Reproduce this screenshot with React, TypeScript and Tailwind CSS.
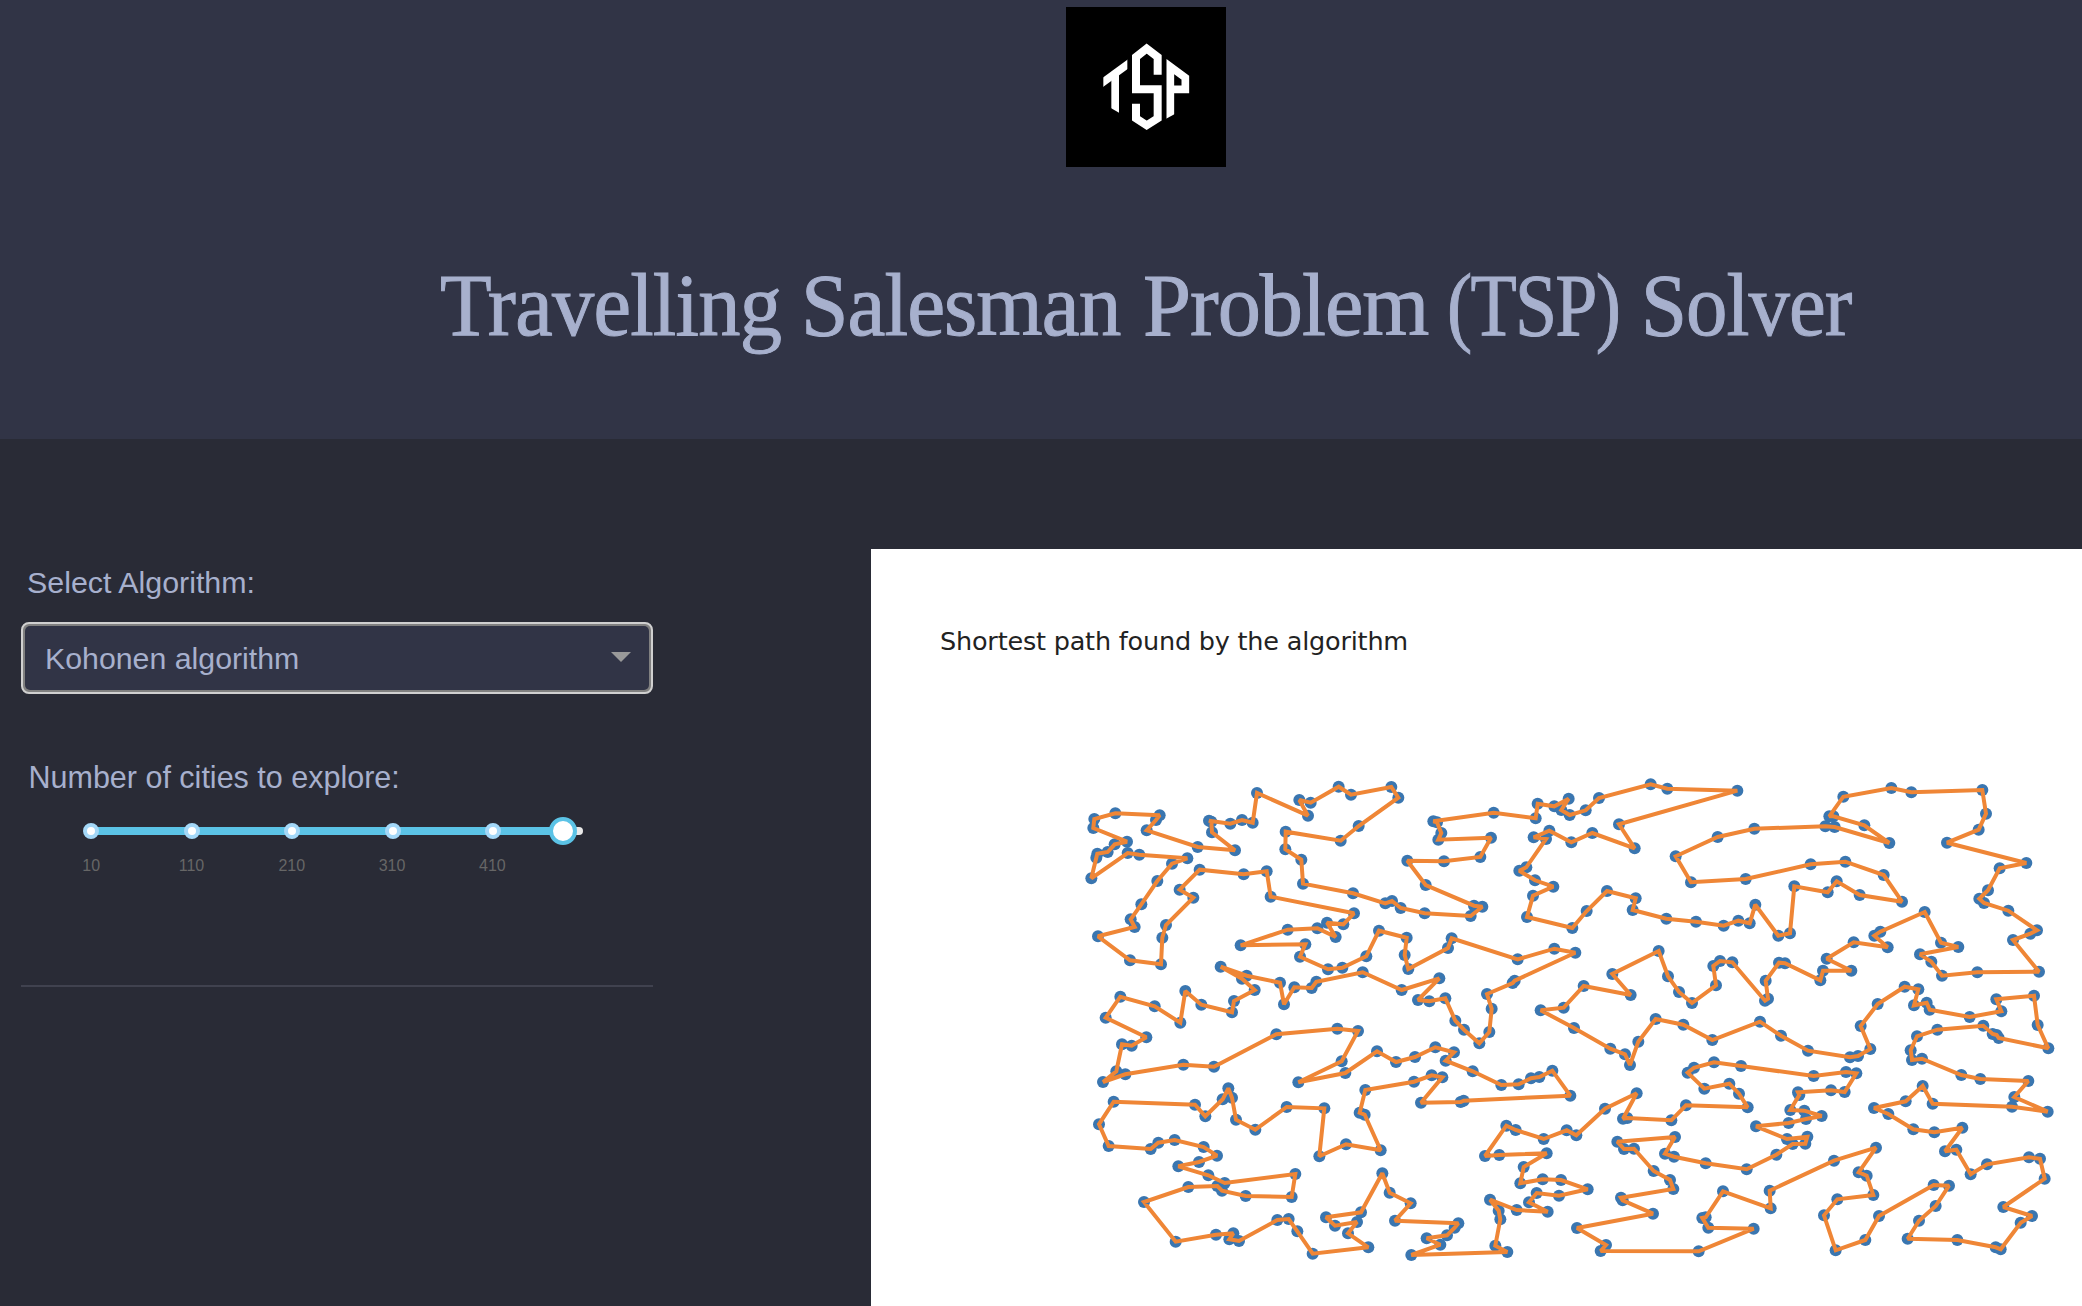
const BLOCKS: Record<string, [number, number]> = {
  A: [1070, 770],
  B: [1390, 770],
  C: [1720, 770],
  D: [1070, 1010],
  E: [1390, 1010],
  F: [1720, 1010],
};

// City coordinates in visiting order, in thirds of a pixel from the block named by the letter before them.
const TOUR = `
A 136,130 269,136 258,150 230,181 383,231 495,241 426,187 424,155 417,152 481,161 516,150 548,158 561,69 714,137 688,90 722,98
806,50 843,74 964,51 985,83 866,168 812,212 647,185 646,238 694,269 699,341 849,370 946,400 966,393 992,414
B 104,430 242,438 277,410 252,407 107,345 52,272 162,274 271,261 303,203 145,209 154,189 141,157 130,154 311,128 437,145 443,101
493,109 536,86 514,120 539,135 587,121 627,84 782,43 832,56
C 52,62
B 687,163 734,235 607,189 544,217 478,182 431,202 468,207 409,292 388,302 435,331 490,350 429,377 411,441 547,474 590,423
651,363 737,385 728,420 829,446 918,455 1001,467
C 55,452 89,460 106,404 175,497 210,490 223,349 323,367 350,334 419,375 546,395 491,315 376,275 272,283 77,327
B 903,337 857,259 983,201
C 103,176 316,169 344,171 508,219 433,166 340,139 328,139 370,80 514,54 574,67 787,60 798,131 776,179 681,218 919,279 839,295
804,361 778,386 792,399 865,422 951,481 931,491 879,510 957,605 772,607 666,617 634,575 600,553 715,531 663,518 614,426
481,485 463,497 503,532 401,517 320,566 394,602 309,602 301,631 195,580 177,578 137,632 144,686 135,692 37,577 0,573
B 970,588 978,646 906,699 867,666 834,619 806,543 667,612 722,675 581,648 521,713 452,721
E 552,54 661,116 705,133 720,165 745,95 797,27 880,44 967,90
F 120,35 183,77 264,122 390,142 414,138 451,117 422,48
C 473,702 554,650 595,658 582,706 620,698 629,719 749,741 844,724 829,688 942,677
F 953,45 985,115 836,84 830,75 818,72 790,47 652,59 591,79 572,121 576,150 606,146 724,195 781,207 925,213 883,261 983,305
876,290 638,281 608,228 557,274 462,294 505,312 580,358 643,367 727,353 675,424 709,419 752,493 801,463 927,442 960,446
974,506 850,591 936,618 902,638 842,718 827,712 712,690 563,686 597,632 647,588 687,527 641,525 477,618 436,690 347,721
312,616 352,568 460,555 440,497 416,487 468,413 342,452 149,542 152,595 9,544
E 947,622 937,624 955,653
F 101,656
E 926,724 632,723 648,705 561,654 789,611 698,571 693,563 850,537 840,510 791,483 732,416 702,417 682,395 855,381 825,431
852,440 947,460
F 80,478 169,434 218,402 256,401 262,380 201,387 108,349 206,339 258,327 305,318 253,302 211,300 238,255 234,247 333,241
374,246 409,190 378,186 281,198 63,168
E 972,157 912,173 893,188 943,236 1018,221
F 57,251 83,292
E 888,286 844,331 712,324 699,326 740,250 645,296 559,376 530,361 461,387 377,360 349,347 285,438 328,435 470,430 401,471
391,520 458,508 513,510 593,538 507,557 440,549 417,577 473,605 380,600 300,569 326,602 331,628 316,707 352,726 64,735
151,704 110,685 171,676 194,653 205,640 15,632 62,580
D 959,548 937,490 873,607 768,622 795,647 861,636 834,670 895,712 728,731 682,664 656,627 622,630 507,693 478,688 490,670
438,674 317,695 222,576 355,531 442,528 456,542 527,558 665,561 676,492 464,519 415,496 325,469 387,456 441,437 401,411
314,390 265,398 242,417 116,408 87,343 131,275 375,284 406,319 458,268 475,235 486,263 498,329 556,359 650,291 763,295
748,439 828,403 932,421 884,314 869,308 886,240
E 72,215 125,196 157,202 93,278 212,276 221,272 541,257 487,182 448,201 423,205 386,223 334,225 248,184 167,152 192,127
136,112 75,141 18,156
D 921,124 826,189 685,217 815,154 864,63 802,56 619,73 432,170 340,164 166,193 99,216 139,184 156,103 185,107 229,82 107,23
A 151,680 254,709 331,758 346,663 394,704 486,727 492,693 554,660 516,626 452,590 530,617 630,638 642,703 673,652 725,654
739,635 878,607 995,660
B 148,625 84,690 118,694 166,685
E 196,32 222,59 268,100 298,66
B 305,716 291,672 368,639 374,632 556,548 493,536 383,568 185,505 174,534 55,597 44,555 50,503
A 927,482 889,559 817,593 774,598 690,560 706,523 512,526 653,479 742,475 797,501 771,458 820,463 852,430 602,380 590,304
521,313 389,299 329,359 370,383 288,465 277,503 273,583 180,571 84,499 194,471 182,448 214,403 262,333 306,281 352,265
208,254 173,249 64,325 79,263 82,251 113,246 134,223 171,215 70,174 73,147`;

function parseTour(text: string): [number, number][] {
  let origin = BLOCKS.A;
  const points: [number, number][] = [];
  for (const token of text.trim().split(/\s+/)) {
    if (token in BLOCKS) {
      origin = BLOCKS[token];
    } else {
      const [x, y] = token.split(",").map(Number);
      points.push([origin[0] + x / 3, origin[1] + y / 3]);
    }
  }
  return points;
}

const cities = parseTour(TOUR);

function Logo() {
  return (
    <svg className="block size-40 bg-black" viewBox="78 21 480 480" fill="none" stroke="#fff" strokeMiterlimit={10}>
      <clipPath id="logo-left">
        <path d="M190 100H262V400H190Z" />
      </clipPath>
      <clipPath id="logo-stem">
        <path d="M200 200H250V346L202 318Z" />
      </clipPath>
      <clipPath id="logo-right">
        <path d="M370 150H460V312L370 361Z" />
      </clipPath>
      <g clipPath="url(#logo-left)">
        <path d="M170 261L282 179" strokeWidth={23} />
      </g>
      <path d="M225.500 225V350" strokeWidth={23} clipPath="url(#logo-stem)" />
      <path d="M353 224V171L320 146L288 171V268H353V355L320 376L288 355V311" strokeWidth={24} />
      <path d="M391 370V200L436 233V268H391" strokeWidth={23} clipPath="url(#logo-right)" />
    </svg>
  );
}

function Header() {
  return (
    <header className="flex h-[439px] w-[2292px] flex-col items-center bg-[#313446] pt-[7px]">
      <Logo />
      <h1 className="mt-[84px] flex h-[110px] w-[1413px] items-center whitespace-nowrap font-['Liberation_Serif',serif] text-[88px] leading-[110px] text-[#a7b0cd] [-webkit-text-stroke:1px_#a7b0cd]">
        <span className="w-[361px] origin-left scale-x-[0.96] tracking-[-0.8px]">Travelling</span>
        <span className="w-[342px] origin-left scale-x-[0.97] tracking-[-1px]">Salesman</span>
        <span className="w-[304px] origin-left scale-x-[0.98] tracking-[-1px]">Problem</span>
        <span className="w-[194px] origin-left scale-x-[0.86] tracking-[-2px]">(TSP)</span>
        <span className="w-[212px] origin-left scale-x-[0.94] tracking-[-1px]">Solver</span>
      </h1>
    </header>
  );
}

function AlgorithmSelect() {
  return (
    <div className="ml-[21px] mt-[22px] h-[72px] w-[632px] rounded-[8px] border-2 border-[#d0d0d0] bg-[#808080] p-[2px]">
      <div className="flex h-full items-center justify-between rounded-[5px] bg-[#313446] pl-5 pr-[18px] text-[#a7b0cd]">
        <span className="mt-0.5 text-[30.3px] leading-9">Kohonen algorithm</span>
        <svg className="-mt-[2px] h-[10px] w-5" viewBox="0 0 20 10" fill="#999">
          <path d="M0 0H20L10 10Z" />
        </svg>
      </div>
    </div>
  );
}

const marks = ["10", "110", "210", "310", "410"];

function CitySlider() {
  return (
    <div className="ml-[41px] mt-[22px] w-[552px]">
      <div className="relative ml-[50px] flex h-7 w-[492px] items-center">
        <div className="h-2 w-full rounded-[6px] bg-[#e9e9e9]">
          <div className="h-full w-[472px] rounded-[6px] bg-[#5bc3e6]" />
        </div>
        <div className="absolute -left-2 flex w-[418px] justify-between">
          {marks.map((mark) => (
            <span key={mark} className="size-4 rounded-full border-4 border-[#a4d8f8] bg-white" />
          ))}
        </div>
        <span className="absolute left-[458px] size-7 rounded-full border-4 border-[#5bc3e6] bg-white" />
      </div>
      <div className="mt-[11px] flex w-[503px]">
        {marks.map((mark) => (
          <span key={mark} className="w-[100.3px] text-center text-[16px] leading-5 text-[#666]">
            {mark}
          </span>
        ))}
      </div>
    </div>
  );
}

function TourChart() {
  const line = cities.map(([x, y]) => `${x.toFixed(1)},${y.toFixed(1)}`).join(" ");
  return (
    <svg className="block h-[606px] w-[1211px]" viewBox="871 700 1211 606">
      <g fill="#3a76b0">
        {cities.map(([x, y], i) => (
          <circle key={i} cx={x} cy={y} r={6} />
        ))}
      </g>
      <polygon points={line} fill="none" stroke="#ef8636" strokeWidth={4} strokeLinejoin="miter" strokeMiterlimit={2} />
    </svg>
  );
}

export default function App() {
  return (
    <div className="h-[1306px] w-[2082px] overflow-hidden bg-[#292b36] font-['Liberation_Sans',Arial,sans-serif]">
      <Header />
      <main className="flex pt-[110px]">
        <aside className="w-[871px] shrink-0 text-[#a7b0cd]">
          <p className="ml-[27px] mt-[15px] text-[30.4px] leading-9">Select Algorithm:</p>
          <AlgorithmSelect />
          <p className="ml-[28.5px] mt-[65px] text-[30.5px] leading-9">Number of cities to explore:</p>
          <CitySlider />
          <hr className="ml-[21px] mt-[109px] w-[632px] border-t-2 border-[#40424f]" />
        </aside>
        <section className="h-[757px] w-[1211px] bg-white">
          <h2 className="h-[151px] pl-[69px] pt-[76px] font-['DejaVu_Sans',Verdana,sans-serif] text-[25.5px] leading-8 tracking-[-0.2px] text-[#222]">
            Shortest path found by the algorithm
          </h2>
          <TourChart />
        </section>
      </main>
    </div>
  );
}
